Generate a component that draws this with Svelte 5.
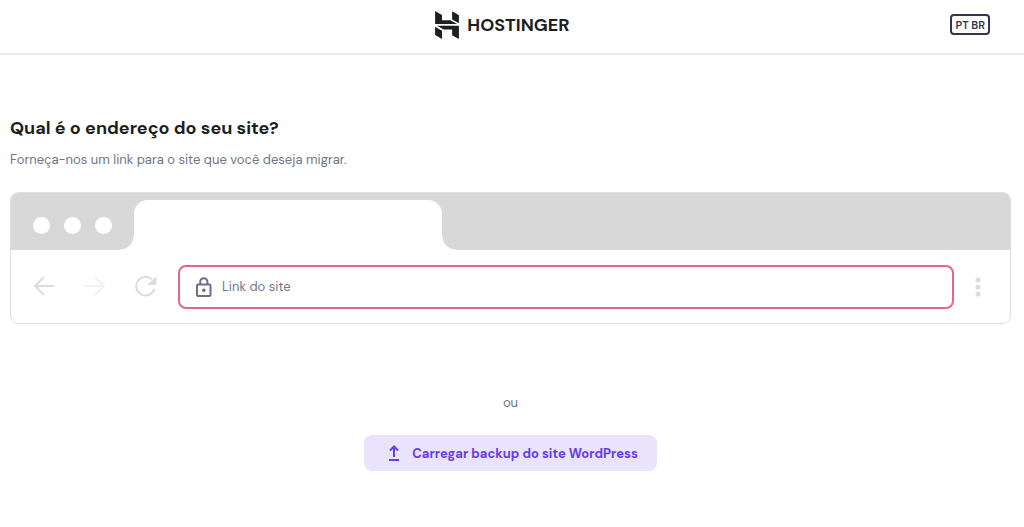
<script lang="ts">
	let siteUrl = '';
</script>

<header class="header">
	<a class="logo" href="/" aria-label="Hostinger">
		<svg width="28" height="28" viewBox="0 0 24 24" fill="currentColor" aria-hidden="true">
			<path d="M16.4 .3v6.9l5.8 3.3V3.6zM1.8 0v11.2h18.8l-5.7-3.3H7.7V3.4zM16.4 20.8v-4.9H9.2l-5.8-3.2h18.8V24zM1.8 13.6v7l5.9 3.4v-7.1z" />
		</svg>
		<span>HOSTINGER</span>
	</a>
	<button class="language" type="button">PT BR</button>
</header>

<main class="content">
	<h1>Qual é o endereço do seu site?</h1>
	<p class="subtitle">Forneça-nos um link para o site que você deseja migrar.</p>

	<div class="browser">
		<div class="tab-strip">
			<div class="dots">
				<span class="dot"></span>
				<span class="dot"></span>
				<span class="dot"></span>
			</div>
			<div class="tab"></div>
		</div>
		<div class="toolbar">
			<div class="nav">
				<svg width="22" height="22" viewBox="0 0 22 22" aria-hidden="true">
					<path d="M21 11H2.5M11 2l-9 9 9 9" />
				</svg>
				<svg class="faded" width="22" height="22" viewBox="0 0 22 22" aria-hidden="true">
					<path d="M1 11h18.5M11 2l9 9-9 9" />
				</svg>
				<svg width="22" height="22" viewBox="0 0 22 22" aria-hidden="true">
					<path d="M19.3 14.2A9.3 9.3 0 1 1 17 4.5" />
					<path class="solid" d="M21.3 1v9h-9z" />
				</svg>
			</div>
			<label class="address">
				<svg width="16" height="20" viewBox="0 0 16 20" aria-hidden="true">
					<rect x="1" y="7.5" width="13.5" height="11.5" rx="1" />
					<path d="M4.2 7.5V4.8a3.6 3.6 0 0 1 7.2 0v2.7" />
					<circle cx="7.8" cy="13.2" r="1.8" />
				</svg>
				<input type="url" placeholder="Link do site" aria-label="Link do site" bind:value={siteUrl} />
			</label>
			<svg class="menu" width="6" height="20" viewBox="0 0 6 20" aria-hidden="true">
				<circle cx="3" cy="3" r="2.5" />
				<circle cx="3" cy="10" r="2.5" />
				<circle cx="3" cy="17" r="2.5" />
			</svg>
		</div>
	</div>

	<div class="alternative">
		<p>ou</p>
		<button class="upload" type="button">
			<svg width="12" height="16" viewBox="0 0 12 16" aria-hidden="true">
				<path d="M6 12V2M2 5.5l4-4 4 4M1 15h10" />
			</svg>
			Carregar backup do site WordPress
		</button>
	</div>
</main>

<style>
	:global(body) {
		margin: 0;
		background: #fff;
		color: #1d1e20;
		font-family: 'DM Sans', Inter, sans-serif;
	}

	.header {
		display: grid;
		grid-template-columns: 1fr auto 1fr;
		align-items: center;
		height: 49px;
		padding: 0 34px 4px 13px;
		border-bottom: 2px solid #e8e8e9;
	}

	.logo {
		grid-column: 2;
		display: flex;
		align-items: center;
		gap: 6px;
		color: #1d1e20;
		font-size: 18px;
		font-weight: 700;
		line-height: 28px;
		text-decoration: none;
	}

	.language {
		justify-self: end;
		height: 21px;
		padding: 0 3px;
		border: 2px solid #36344d;
		border-radius: 4px;
		background: #fff;
		color: #36344d;
		font: inherit;
		font-size: 11px;
		font-weight: 600;
		line-height: 16px;
		cursor: pointer;
	}

	.content {
		padding: 59px 13px 40px 10px;
	}

	h1 {
		margin: 0;
		font-size: 18px;
		font-weight: 700;
		line-height: 28px;
	}

	p {
		margin: 0;
		color: #727586;
		font-size: 13px;
		line-height: 20px;
	}

	.subtitle {
		margin-top: 8px;
	}

	.browser {
		margin-top: 22px;
		overflow: hidden;
		border: 1px solid #dfdfe2;
		border-radius: 8px;
	}

	.tab-strip {
		display: flex;
		height: 50px;
		padding-top: 7px;
		background: #d8d8d8;
	}

	.dots {
		display: flex;
		align-items: center;
		gap: 14px;
		width: 101px;
		padding-left: 22px;
	}

	.dot {
		width: 17px;
		height: 17px;
		border-radius: 50%;
		background: #fff;
	}

	.tab {
		position: relative;
		width: 308px;
		border-radius: 14px 14px 0 0;
		background: #fff;
	}

	/* curved feet of the tab */
	.tab::before,
	.tab::after {
		content: '';
		position: absolute;
		bottom: 0;
		width: 14px;
		height: 14px;
	}

	.tab::before {
		right: 100%;
		background: radial-gradient(circle at 0 0, #d8d8d8 13px, #fff 14px);
	}

	.tab::after {
		left: 100%;
		background: radial-gradient(circle at 100% 0, #d8d8d8 13px, #fff 14px);
	}

	.toolbar {
		display: flex;
		align-items: center;
		padding: 15px 29px 14px 22px;
	}

	.nav {
		display: flex;
		gap: 29px;
		margin: 0 21px 2px 0;
	}

	.nav svg {
		fill: none;
		stroke: #dadce0;
		stroke-width: 2;
	}

	.nav .faded {
		stroke: #f0f1f5;
	}

	.nav .solid {
		fill: #dadce0;
		stroke: none;
	}

	.address {
		display: flex;
		flex: 1;
		align-items: center;
		gap: 10px;
		height: 40px;
		padding: 0 16px;
		border: 2px solid #e9638c;
		border-radius: 8px;
	}

	.address svg {
		fill: none;
		stroke: #6d7081;
		stroke-width: 2;
	}

	.address circle {
		fill: #6d7081;
		stroke: none;
	}

	.address input {
		flex: 1;
		min-width: 0;
		padding: 0;
		border: 0;
		outline: 0;
		background: none;
		color: #1d1e20;
		font: inherit;
		font-size: 13px;
		line-height: 20px;
	}

	.address input::placeholder {
		color: #727586;
		opacity: 1;
	}

	.menu {
		margin-left: 21px;
		fill: #dadce0;
	}

	.alternative {
		display: flex;
		flex-direction: column;
		align-items: center;
		gap: 22px;
		margin-top: 69px;
	}

	.upload {
		display: flex;
		align-items: center;
		gap: 12px;
		height: 36px;
		padding: 0 19px 0 24px;
		border: 0;
		border-radius: 8px;
		background: #e9e3fc;
		color: #673de6;
		font: inherit;
		font-size: 13px;
		font-weight: 700;
		cursor: pointer;
	}

	.upload svg {
		fill: none;
		stroke: currentColor;
		stroke-width: 2;
	}
</style>
